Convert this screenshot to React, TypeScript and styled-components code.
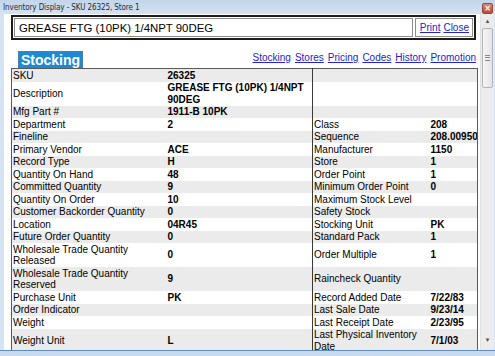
import styled, { createGlobalStyle } from "styled-components"

const GlobalStyle = createGlobalStyle`
  html, body {
    margin: 0;
    padding: 0;
    background: #fff;
  }
  body {
    font-family: "Liberation Sans", Arial, sans-serif;
  }
`

const StyledWindow = styled.div`
  width: 495px;
  height: 356px;
  display: flex;
  flex-direction: column;
  background: #d5e3f2;
  overflow: hidden;
`

const StyledTitleBar = styled.div`
  height: 14px;
  flex: none;
  display: flex;
  align-items: center;
  justify-content: space-between;
  padding: 0 2px 0 3px;
  background: linear-gradient(#c2d5ea, #d4e2f1);
  color: #1e2a38;
  font: 8px "DejaVu Sans Condensed", "DejaVu Sans", sans-serif;
  letter-spacing: -0.1px;
`

const StyledCloseButton = styled.div`
  width: 9px;
  height: 9px;
  margin-top: 2px;
  border: 1px solid #8a4a40;
  border-radius: 2px;
  background: linear-gradient(#d98a7a, #b9483a);
  color: #fff;
  font: bold 8px/9px "DejaVu Sans", sans-serif;
  text-align: center;
`

const StyledBody = styled.div`
  flex: 1;
  display: flex;
  min-height: 0;
  padding-left: 4px;
  padding-right: 1px;
`

const StyledContent = styled.div`
  flex: 1;
  background: #fff;
  overflow: hidden;
  padding: 1px 0 0 7px;
  font-size: 10px;
`

const StyledScrollbar = styled.div`
  width: 14px;
  flex: none;
  display: flex;
  flex-direction: column;
  align-items: center;
  background: #ececec;
  border-left: 1px solid #e0e0e0;
  box-sizing: border-box;
`

const StyledArrow = styled.div<{ $top?: boolean }>`
  height: 11px;
  line-height: 11px;
  font-size: 6px;
  color: #555;
  margin: ${(p) => (p.$top ? "2px 0 1px" : "auto 0 4px")};
`

const StyledThumb = styled.div`
  width: 11px;
  height: 60px;
  box-sizing: border-box;
  border: 1px solid #b4b4b4;
  border-radius: 2px;
  background: linear-gradient(90deg, #f6f6f6, #e4e4e4);
  display: flex;
  align-items: center;
  justify-content: center;
`

const StyledGrip = styled.div`
  width: 5px;
  height: 4px;
  border-top: 1px solid #888;
  border-bottom: 1px solid #888;
  position: relative;
  &::after {
    content: "";
    position: absolute;
    left: 0;
    right: 0;
    top: 1px;
    border-top: 1px solid #888;
  }
`

const StyledBottomFrame = styled.div`
  height: 5px;
  flex: none;
  border-top: 1px solid #5f8cbd;
  background: #c8daee;
`

const StyledHeaderBox = styled.div`
  display: flex;
  gap: 2px;
  width: 465px;
  height: 25px;
  box-sizing: border-box;
  border: 2px solid #1c1c1c;
  padding: 1px;
`

const StyledHeaderCell = styled.div<{ $grow?: boolean }>`
  flex: ${(p) => (p.$grow ? 1 : "none")};
  display: flex;
  align-items: center;
  gap: 3px;
  padding: 0 3px 0 4px;
  border: 1px solid #8c8c8c;
  font-size: ${(p) => (p.$grow ? "11.4px" : "10px")};
  color: #000;
`

const StyledLink = styled.a`
  color: #2424cc;
  text-decoration: underline;
  font-size: 10px;
  cursor: pointer;
`

const StyledTabRow = styled.div`
  display: flex;
  align-items: flex-end;
  justify-content: space-between;
  width: 466px;
  margin-top: 11px;
`

const StyledTab = styled.div`
  margin-left: 7px;
  width: 65px;
  height: 17px;
  box-sizing: border-box;
  border: 1px solid #4a7faa;
  border-bottom: none;
  background: #1d8bd3;
  color: #fff;
  font: bold 14px/16px "Liberation Sans", Arial, sans-serif;
  text-align: center;
`

const StyledNav = styled.nav`
  display: flex;
  gap: 4px;
  margin-bottom: 5px;
  padding-right: 1px;
`

const StyledTable = styled.table`
  width: 466px;
  table-layout: fixed;
  border-collapse: collapse;
  border: 1px solid #5a5a5a;
  font-size: 10px;
  color: #000;

  tr:nth-child(odd) {
    background: #ebebeb;
  }
`

const StyledCell = styled.td<{ $value?: boolean; $divide?: boolean }>`
  padding: 0.5px 1px 0.5px ${(p) => (p.$value ? "2px" : "1px")};
  line-height: 11.5px;
  vertical-align: middle;
  font-weight: ${(p) => (p.$value ? "bold" : "normal")};
  border-left: ${(p) => (p.$divide ? "1px solid #3a3a3a" : "none")};
  overflow: hidden;
`

type Row = [string, string, string?, string?]

const rows: Row[] = [
  ["SKU", "26325"],
  ["Description", "GREASE FTG (10PK) 1/4NPT 90DEG"],
  ["Mfg Part #", "1911-B 10PK"],
  ["Department", "2", "Class", "208"],
  ["Fineline", "", "Sequence", "208.00950"],
  ["Primary Vendor", "ACE", "Manufacturer", "1150"],
  ["Record Type", "H", "Store", "1"],
  ["Quantity On Hand", "48", "Order Point", "1"],
  ["Committed Quantity", "9", "Minimum Order Point", "0"],
  ["Quantity On Order", "10", "Maximum Stock Level", ""],
  ["Customer Backorder Quantity", "0", "Safety Stock", ""],
  ["Location", "04R45", "Stocking Unit", "PK"],
  ["Future Order Quantity", "0", "Standard Pack", "1"],
  ["Wholesale Trade Quantity Released", "0", "Order Multiple", "1"],
  ["Wholesale Trade Quantity Reserved", "9", "Raincheck Quantity", ""],
  ["Purchase Unit", "PK", "Record Added Date", "7/22/83"],
  ["Order Indicator", "", "Last Sale Date", "9/23/14"],
  ["Weight", "", "Last Receipt Date", "2/23/95"],
  ["Weight Unit", "L", "Last Physical Inventory Date", "7/1/03"],
]

const navLinks = ["Stocking", "Stores", "Pricing", "Codes", "History", "Promotion"]

export default function App() {
  return (
    <>
      <GlobalStyle />
      <StyledWindow>
        <StyledTitleBar>
          <span>Inventory Display - SKU 26325, Store 1</span>
          <StyledCloseButton>×</StyledCloseButton>
        </StyledTitleBar>
        <StyledBody>
          <StyledContent>
            <StyledHeaderBox>
              <StyledHeaderCell $grow>GREASE FTG (10PK) 1/4NPT 90DEG</StyledHeaderCell>
              <StyledHeaderCell>
                <StyledLink>Print</StyledLink>
                <StyledLink>Close</StyledLink>
              </StyledHeaderCell>
            </StyledHeaderBox>
            <StyledTabRow>
              <StyledTab>Stocking</StyledTab>
              <StyledNav>
                {navLinks.map((l) => (
                  <StyledLink key={l}>{l}</StyledLink>
                ))}
              </StyledNav>
            </StyledTabRow>
            <StyledTable>
              <colgroup>
                <col style={{ width: 154 }} />
                <col style={{ width: 147 }} />
                <col style={{ width: 116 }} />
                <col style={{ width: 49 }} />
              </colgroup>
              <tbody>
                {rows.map(([label, value, label2, value2]) => (
                  <tr key={label}>
                    <StyledCell>{label}</StyledCell>
                    <StyledCell $value>{value}</StyledCell>
                    <StyledCell $divide>{label2}</StyledCell>
                    <StyledCell $value>{value2}</StyledCell>
                  </tr>
                ))}
              </tbody>
            </StyledTable>
          </StyledContent>
          <StyledScrollbar>
            <StyledArrow $top>▲</StyledArrow>
            <StyledThumb>
              <StyledGrip />
            </StyledThumb>
            <StyledArrow>▼</StyledArrow>
          </StyledScrollbar>
        </StyledBody>
        <StyledBottomFrame />
      </StyledWindow>
    </>
  )
}
